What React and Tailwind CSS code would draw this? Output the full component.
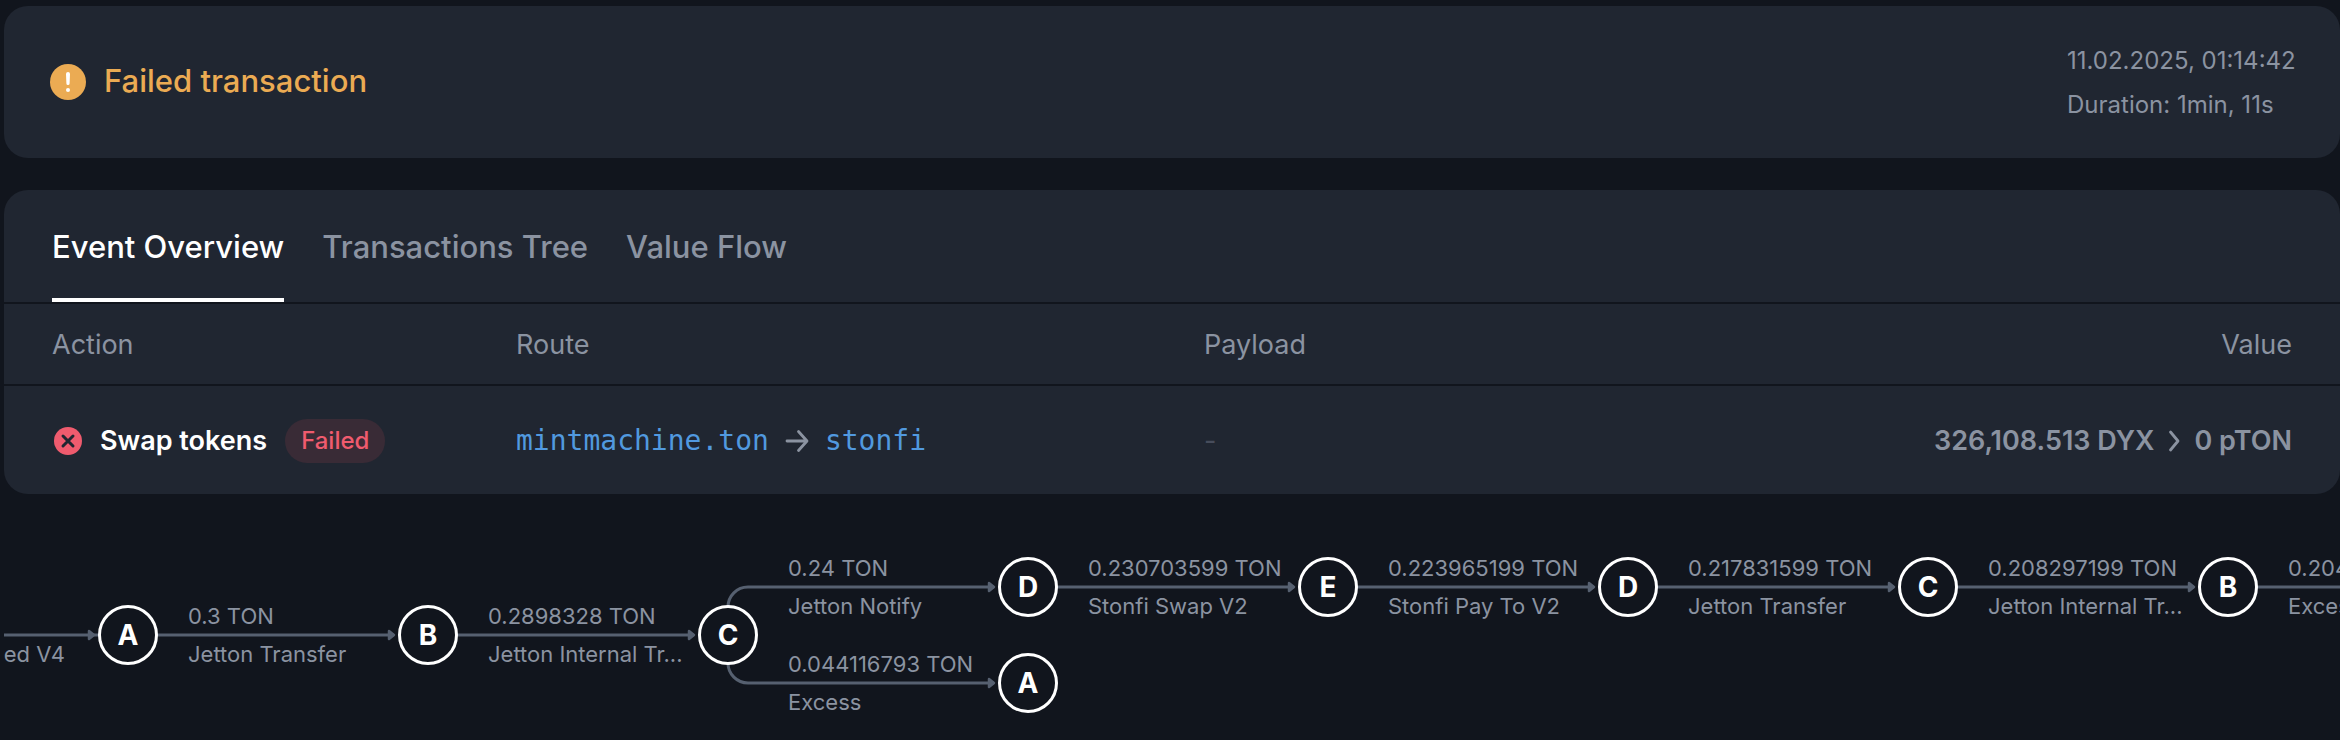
import React from "react";

const STEP = 300;
const START_X = 124;

const nodes = [
  { id: "n0", label: "A", x: START_X, y: 48 },
  { id: "n1", label: "B", x: START_X + STEP, y: 48 },
  { id: "n2", label: "C", x: START_X + STEP * 2, y: 48 },
  { id: "n3", label: "D", x: START_X + STEP * 3, y: 0 },
  { id: "n4", label: "A", x: START_X + STEP * 3, y: 96 },
  { id: "n5", label: "E", x: START_X + STEP * 4, y: 0 },
  { id: "n6", label: "D", x: START_X + STEP * 5, y: 0 },
  { id: "n7", label: "C", x: START_X + STEP * 6, y: 0 },
  { id: "n8", label: "B", x: START_X + STEP * 7, y: 0 },
];

const edges = [
  { from: START_X - STEP, y: 48, amount: "", type: "Wallet Signed V4", attached: true },
  { from: START_X, y: 48, amount: "0.3 TON", type: "Jetton Transfer" },
  { from: START_X + STEP, y: 48, amount: "0.2898328 TON", type: "Jetton Internal Tr..." },
  { from: START_X + STEP * 2, y: 0, amount: "0.24 TON", type: "Jetton Notify", branch: "up" },
  { from: START_X + STEP * 2, y: 96, amount: "0.044116793 TON", type: "Excess", branch: "down" },
  { from: START_X + STEP * 3, y: 0, amount: "0.230703599 TON", type: "Stonfi Swap V2" },
  { from: START_X + STEP * 4, y: 0, amount: "0.223965199 TON", type: "Stonfi Pay To V2" },
  { from: START_X + STEP * 5, y: 0, amount: "0.217831599 TON", type: "Jetton Transfer" },
  { from: START_X + STEP * 6, y: 0, amount: "0.208297199 TON", type: "Jetton Internal Tr..." },
  { from: START_X + STEP * 7, y: 0, amount: "0.204 TON", type: "Excess" },
];

function edgePath({ from, y, branch, attached }) {
  const cy = y + 30;
  const end = from + STEP - (attached ? 28 : 34);
  if (branch === "up") return `M${from} ${cy + 20} A20 20 0 0 1 ${from + 20} ${cy} H${end}`;
  if (branch === "down") return `M${from} ${cy - 20} A20 20 0 0 0 ${from + 20} ${cy} H${end}`;
  return `M${from + 28} ${cy} H${end}`;
}

function WarningIcon() {
  return (
    <svg className="size-9 shrink-0" viewBox="0 0 36 36" aria-hidden="true">
      <circle cx="18" cy="18" r="18" fill="#ebab53" />
      <path d="M16 10a2 2 0 0 1 4 0l-.4 9.500a1.600 1.600 0 0 1-3.200 0z" fill="#fff" />
      <circle cx="18" cy="26" r="2" fill="#fff" />
    </svg>
  );
}

function FailedIcon() {
  return (
    <svg className="size-7 shrink-0" viewBox="0 0 28 28" aria-hidden="true">
      <circle cx="14" cy="14" r="14" fill="#ef5b6e" />
      <path d="M9 9l10 10M19 9l-10 10" stroke="#202631" strokeWidth="3" strokeLinecap="round" />
    </svg>
  );
}

function ArrowIcon() {
  return (
    <svg className="size-6 shrink-0" viewBox="0 0 24 24" fill="none" stroke="#8b93a1" strokeWidth="2.8" strokeLinecap="round" strokeLinejoin="round" aria-hidden="true">
      <path d="M2 12H21.5M13.5 2.500L22 12l-8.500 9.500" />
    </svg>
  );
}

function Chevron() {
  return (
    <svg className="h-6 w-3 shrink-0" viewBox="0 0 12 24" fill="none" stroke="#8b93a1" strokeWidth="2.8" strokeLinecap="round" strokeLinejoin="round" aria-hidden="true">
      <path d="M2.500 3L10 12l-7.500 9" />
    </svg>
  );
}

function StatusCard() {
  return (
    <section className="flex min-h-38 items-center justify-between rounded-3xl bg-[#202631] pr-10 pl-[46px]">
      <div className="flex items-center gap-[18px]">
        <WarningIcon />
        <h1 className="pb-0.5 text-[31px] leading-10 font-medium text-[#ebab53]">Failed transaction</h1>
      </div>
      <div className="min-w-[233px] pt-0.5 text-2xl leading-[44px] text-[#8b93a1]">
        <div>11.02.2025, 01:14:42</div>
        <div>Duration: 1min, 11s</div>
      </div>
    </section>
  );
}

const tabs = ["Event Overview", "Transactions Tree", "Value Flow"];

function EventCard() {
  return (
    <section className="overflow-hidden rounded-3xl bg-[#202631]">
      <nav role="tablist" className="flex gap-[38px] px-12">
        {tabs.map((tab, i) => (
          <button
            key={tab}
            type="button"
            role="tab"
            aria-selected={i === 0}
            className={
              i === 0
                ? "h-28 border-b-4 border-white pt-1.5 text-[31px] leading-10 font-medium text-white"
                : "h-28 border-b-4 border-transparent pt-1.5 text-[31px] leading-10 font-medium text-[#8b93a1]"
            }
          >
            {tab}
          </button>
        ))}
      </nav>
      <table className="w-full table-fixed border-separate border-spacing-0 text-left text-[27px] text-[#8b93a1] [&_td]:border-t-2 [&_td]:border-[#11151d] [&_td]:pt-0.5 [&_th]:border-t-2 [&_th]:border-[#11151d] [&_th]:pt-0.5 [&_th]:font-normal">
        <thead>
          <tr className="h-[82px]">
            <th className="w-[512px] pl-12">Action</th>
            <th className="w-[688px]">Route</th>
            <th>Payload</th>
            <th className="pr-12 text-right">Value</th>
          </tr>
        </thead>
        <tbody>
          <tr className="h-[110px]">
            <td className="pl-[50px]">
              <div className="flex items-center gap-[18px]">
                <FailedIcon />
                <span className="font-semibold text-white">Swap tokens</span>
                <span className="rounded-full bg-[#392b36] px-4 text-2xl leading-[44px] font-medium text-[#ef5b6e]">Failed</span>
              </div>
            </td>
            <td>
              <div className="flex items-center gap-4 font-['DejaVu_Sans_Mono',monospace] text-[28px] text-[#5199df]">
                <a href="#mintmachine">mintmachine.ton</a>
                <ArrowIcon />
                <a href="#stonfi">stonfi</a>
              </div>
            </td>
            <td className="text-[#474d5c]">-</td>
            <td className="pr-12">
              <div className="flex items-center justify-end gap-3.5 font-semibold">
                <span>326,108.513 DYX</span>
                <Chevron />
                <span>0 pTON</span>
              </div>
            </td>
          </tr>
        </tbody>
      </table>
    </section>
  );
}

function TraceGraph() {
  return (
    <section className="overflow-hidden pt-[63px]" aria-label="Transaction trace">
      <div className="relative h-[183px]">
        <svg className="absolute inset-0 h-full w-full" aria-hidden="true">
          {edges.map((e) => (
            <g key={`${e.from}-${e.y}`}>
              <path d={edgePath(e)} fill="none" stroke="#566070" strokeWidth="3" />
              <path
                d={`M${e.from + STEP - 39} ${e.y + 26} l5 4 l-5 4 z`}
                fill="#566070"
                stroke="#566070"
                strokeWidth="2.5"
                strokeLinejoin="round"
              />
            </g>
          ))}
        </svg>
        {edges.map((e) => (
          <div
            key={`${e.from}-${e.y}`}
            className="absolute text-[22px] leading-[38px] whitespace-nowrap text-[#8b93a1]"
            style={{ left: e.from + 60, top: e.y - 8 }}
          >
            <div className="h-[38px]">{e.amount}</div>
            <div>{e.type}</div>
          </div>
        ))}
        {nodes.map((n) => (
          <div
            key={n.id}
            className="absolute flex size-[60px] items-center justify-center rounded-full border-3 border-white bg-[#11151d] text-[28px] font-bold text-white"
            style={{ left: n.x - 30, top: n.y }}
          >
            {n.label}
          </div>
        ))}
      </div>
    </section>
  );
}

export default function App() {
  return (
    <main className="flex min-h-screen flex-col bg-[#11151d] pt-[6px] pl-1 font-[Inter,sans-serif]">
      <div className="flex flex-col gap-8">
        <StatusCard />
        <EventCard />
      </div>
      <TraceGraph />
    </main>
  );
}
